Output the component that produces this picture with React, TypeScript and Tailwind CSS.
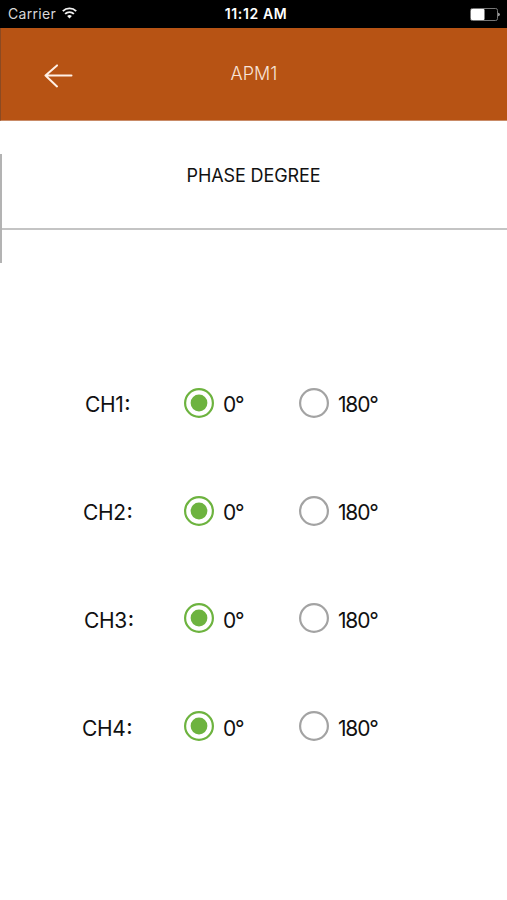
import { useState } from 'react';
import clsx from 'clsx';

type Phase = 0 | 180;

interface Channel {
  id: number;
  label: string;
  labelClass: string;
}

const CHANNELS: Channel[] = [
  { id: 1, label: 'CH1', labelClass: 'pl-[85px]' },
  { id: 2, label: 'CH2', labelClass: 'pl-[83px]' },
  { id: 3, label: 'CH3', labelClass: 'pl-[84px]' },
  { id: 4, label: 'CH4', labelClass: 'pl-[82px]' },
];

function StatusBar() {
  return (
    <div className="grid h-7 grid-cols-3 items-center bg-black text-white">
      <div className="flex items-center gap-[6px] pl-[8px]">
        <span className="text-[14px] leading-none tracking-[0.32px] text-[#d8d8d8]">Carrier</span>
        <svg width="15" height="12" viewBox="0 0 15 12" fill="none" stroke="#f2f2f2" strokeWidth="1.9" className="-mt-0.5">
          <path d="M0.8 4.1a9.6 9.6 0 0 1 13.4 0" />
          <path d="M3.1 6.9a6.3 6.3 0 0 1 8.8 0" />
          <path d="M7.5 11.6 5.1 9.1a3.5 3.5 0 0 1 4.8 0Z" fill="#f2f2f2" stroke="none" />
        </svg>
      </div>
      <span className="pl-[5px] text-center text-[14px] leading-none font-semibold tracking-[0.6px] whitespace-nowrap">
        11:12 AM
      </span>
      <div className="flex justify-end pr-[7px]">
        <svg width="30" height="13" viewBox="0 0 30 13">
          <rect x="0.5" y="0.5" width="27" height="12" rx="1.8" fill="none" stroke="#777" />
          <rect x="1" y="1" width="13.5" height="11" rx="1" fill="#fff" />
          <path d="M28.3 4.8c1 .3 1.4.9 1.4 1.7s-.4 1.4-1.4 1.7Z" fill="#ddd" />
        </svg>
      </div>
    </div>
  );
}

function Header() {
  return (
    <header className="grid h-[93px] grid-cols-3 border-b border-l border-b-[#c98b67] border-l-[#8c4a22] bg-[#b75314]">
      <button type="button" aria-label="Back" className="flex items-start pt-9 pl-[43px]">
        <svg width="29" height="24" viewBox="0 0 29 24" fill="none" stroke="#fff0e6" strokeWidth="2" strokeLinecap="round" strokeLinejoin="round">
          <path d="M13 1.4 1.5 11.6 13 22.4M1.5 11.6H27.5" />
        </svg>
      </button>
      <h1 className="pt-[35px] text-center text-[18px] leading-[22px] font-light tracking-[0.1px] text-[#f8e4d8]">APM1</h1>
    </header>
  );
}

interface RadioProps {
  name: string;
  label: string;
  checked: boolean;
  onChange: () => void;
}

function Radio({ name, label, checked, onChange }: RadioProps) {
  return (
    <label className="flex cursor-pointer items-center gap-[9px]">
      <input type="radio" name={name} checked={checked} onChange={onChange} className="sr-only" />
      <svg width="30" height="30" viewBox="0 0 30 30" className="shrink-0">
        <circle cx="15" cy="15" r="13.9" fill="none" strokeWidth="2.2" stroke={checked ? '#6db33f' : '#a3a3a3'} />
        {checked && <circle cx="15" cy="15" r="8.4" fill="#6db33f" />}
      </svg>
      <span className="pt-[5px] text-[21px] leading-6 tracking-[-1.2px]">{label}</span>
    </label>
  );
}

export default function App() {
  const [phases, setPhases] = useState<Record<number, Phase>>({ 1: 0, 2: 0, 3: 0, 4: 0 });

  const setPhase = (id: number, phase: Phase): void => {
    setPhases((prev) => ({ ...prev, [id]: phase }));
  };

  return (
    <div className="min-h-[900px] w-[507px] overflow-hidden bg-white font-['Inter','Liberation_Sans',sans-serif] text-[#111]">
      <StatusBar />
      <Header />

      <section className="mt-[33px] h-[109px] border-l-2 border-[#b3b3b3]">
        <div className="h-[76px] border-b-2 border-[#c4c4c4] pt-[11px] pr-0.5">
          <h2 className="text-center text-[18px] leading-[22px] tracking-[-0.1px]">PHASE DEGREE</h2>
        </div>
      </section>

      <div className="mt-[86px]">
        {CHANNELS.map(({ id, label, labelClass }) => (
          <div key={id} className="grid h-[107.8px] grid-cols-[184px_115px_1fr] items-center">
            <span className={clsx('flex pt-[5px] text-[21px] leading-6 tracking-[-0.4px]', labelClass)}>
              {label}
              <span className="-mt-0.5 ml-px font-medium">:</span>
            </span>
            <Radio name={label} label="0°" checked={phases[id] === 0} onChange={() => setPhase(id, 0)} />
            <Radio name={label} label="180°" checked={phases[id] === 180} onChange={() => setPhase(id, 180)} />
          </div>
        ))}
      </div>
    </div>
  );
}
